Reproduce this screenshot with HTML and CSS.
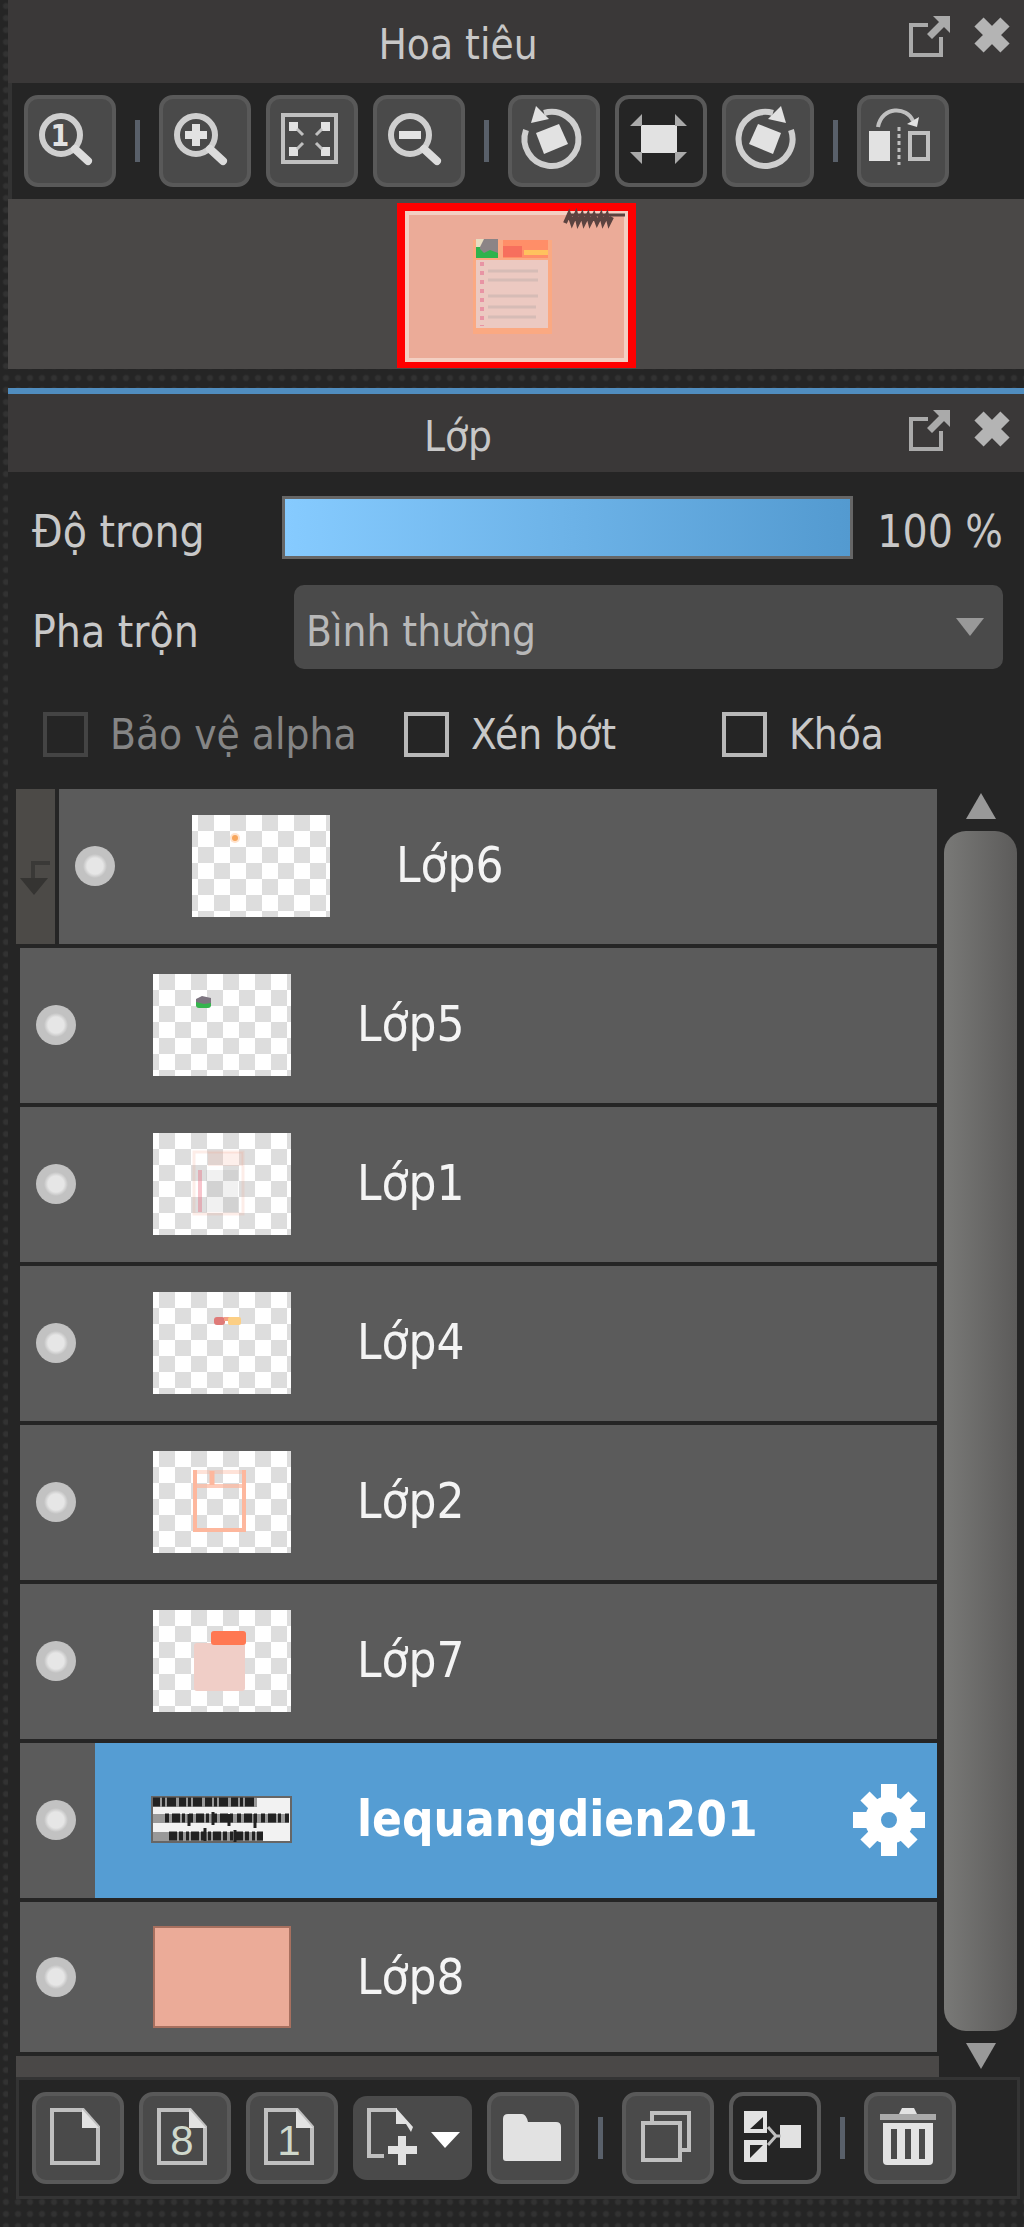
FILE: index.html
```html
<!DOCTYPE html>
<html lang="vi">
<head>
    <meta charset="UTF-8">
    <title>Hoa tiêu - Lớp</title>
    <link rel="stylesheet" href="styles.css">
</head>
<body>

<section class="panel">
    <header class="panel-header">
        <h2>Hoa tiêu</h2>
        <button class="header-btn" aria-label="Tách cửa sổ">
            <svg width="44" height="44"><path d="M20 11H3v30h30V23" fill="none" stroke="#aaa" stroke-width="4"/><path d="M25 2h17v17zM34 5l5 5-15 15-5-5z" fill="#aaa"/></svg>
        </button>
        <button class="header-btn" aria-label="Đóng">
            <svg width="40" height="44"><path d="M7 8l26 26M33 8L7 34" stroke="#b4b4b4" stroke-width="13"/></svg>
        </button>
    </header>

    <div class="toolbar">
        <button class="tool" aria-label="100%">
            <svg viewBox="4 4 84 84"><circle cx="37" cy="40" r="19" class="line thick"/><path d="M51 54l13 12" class="line handle"/><text x="36" y="51" class="mag-text">1</text></svg>
        </button>
        <span class="sep"></span>
        <button class="tool" aria-label="Phóng to">
            <svg viewBox="4 4 84 84"><circle cx="37" cy="40" r="19" class="line thick"/><path d="M51 54l13 12" class="line handle"/><path d="M26 40h22M37 29v22" class="line bold"/></svg>
        </button>
        <button class="tool" aria-label="Vừa màn hình">
            <svg viewBox="4 4 84 84"><rect x="17" y="20" width="53" height="47" class="line"/><path d="M23 27h9v9h-9zM55 27h9v9h-9zM23 52h9v9h-9zM55 52h9v9h-9z" class="fill"/><path d="M31 34l6 6M56 34l-6 6M31 54l6-6M56 54l-6-6" class="line thin"/></svg>
        </button>
        <button class="tool" aria-label="Thu nhỏ">
            <svg viewBox="4 4 84 84"><circle cx="37" cy="40" r="19" class="line thick"/><path d="M51 54l13 12" class="line handle"/><path d="M26 40h22" class="line bold"/></svg>
        </button>
        <span class="sep"></span>
        <button class="tool" aria-label="Xoay trái">
            <svg viewBox="4 4 84 84"><path d="M18 35A27 27 0 1 0 36 18" class="line thick"/><path d="M28 11l13 13-18 4z" class="fill"/><path d="M28 38l23-9 9 20-24 10z" class="fill"/></svg>
        </button>
        <button class="tool active" aria-label="Đặt lại góc xoay">
            <svg viewBox="4 4 84 84"><path d="M26 30h36v28H26z" class="fill"/><path d="M27 19v12H15zM60 19v12h12zM15 57h12v12zM60 57h12L60 69z" fill="#aaa"/></svg>
        </button>
        <button class="tool" aria-label="Xoay phải">
            <svg viewBox="4 4 84 84"><g transform="translate(87 0) scale(-1 1)"><path d="M18 35A27 27 0 1 0 36 18" class="line thick"/><path d="M28 11l13 13-18 4z" class="fill"/><path d="M28 38l23-9 9 20-24 10z" class="fill"/></g></svg>
        </button>
        <span class="sep"></span>
        <button class="tool" aria-label="Lật ngang">
            <svg viewBox="4 4 84 84"><path d="M12 36h21v30H12z" class="fill"/><rect x="53" y="38" width="18" height="26" class="line"/><path d="M42 32v38" class="line thin" stroke-dasharray="4 3"/><path d="M21 32C25 11 50 11 56 26" class="line"/><path d="M50 29l12-7-2 10z" class="fill"/></svg>
        </button>
    </div>

    <div class="navigator">
        <svg class="preview" width="239" height="165">
            <rect width="239" height="165" fill="#f00"/>
            <rect x="8" y="8" width="223" height="151" fill="#f3cfc2"/>
            <rect x="12" y="12" width="215" height="143" fill="#ebab98"/>
            <rect x="76" y="37" width="79" height="94" fill="#fba982"/>
            <rect x="79" y="57" width="72" height="68" fill="#ecc9c1"/>
            <rect x="79" y="36" width="22" height="19" fill="#2eb34c"/>
            <path d="M83 46V36h18v14l-8-3-6 3z" fill="#8b8486"/>
            <path d="M79 44v-8h8l-4 8z" fill="#e8dcc0"/>
            <rect x="106" y="37" width="45" height="18" fill="#ff8e68"/>
            <path d="M106 43h19v11h-19z" fill="#f76f5d"/>
            <path d="M127 47h24v5h-24z" fill="#ffc25e"/>
            <path d="M91 68h50M91 77h50M91 93h50M91 104h48M91 114h48" stroke="#d6bcb6" stroke-width="3"/>
            <path d="M85 59v64" stroke="#e894a4" stroke-width="4" stroke-dasharray="4 5"/>
            <path d="M168 20l4-9 3 9 4-9 2 9 4-8 2 8 4-8 2 8 4-8 3 8 4-8 2 8 4-8 2 8 3-6" fill="none" stroke="#5b4340" stroke-width="4"/>
            <path d="M172 12h46M216 12h12" stroke="#5b4340" stroke-width="3"/>
        </svg>
    </div>
</section>

<div class="splitter"></div>

<section class="panel focused">
    <header class="panel-header">
        <h2>Lớp</h2>
        <button class="header-btn" aria-label="Tách cửa sổ">
            <svg width="44" height="44"><path d="M20 11H3v30h30V23" fill="none" stroke="#aaa" stroke-width="4"/><path d="M25 2h17v17zM34 5l5 5-15 15-5-5z" fill="#aaa"/></svg>
        </button>
        <button class="header-btn" aria-label="Đóng">
            <svg width="40" height="44"><path d="M7 8l26 26M33 8L7 34" stroke="#b4b4b4" stroke-width="13"/></svg>
        </button>
    </header>

    <div class="options">
        <div class="option-row">
            <label for="opacity">Độ trong</label>
            <input type="range" id="opacity" class="opacity" min="0" max="100" value="100">
            <output for="opacity">100 %</output>
        </div>
        <div class="option-row">
            <label for="blend">Pha trộn</label>
            <div class="select-box">
                <select id="blend">
                    <option>Bình thường</option>
                </select>
            </div>
        </div>
        <div class="checks">
            <label class="disabled"><input type="checkbox" disabled>Bảo vệ alpha</label>
            <label><input type="checkbox">Xén bớt</label>
            <label><input type="checkbox">Khóa</label>
        </div>
    </div>

    <div class="layers-area">
        <ul class="layers">
            <li class="layer clipped">
                <span class="clip"><svg width="39" height="40"><path d="M34 6H17v16" fill="none" stroke="#3a3937" stroke-width="4"/><path d="M4 21h28L18 38z" fill="#353432"/></svg></span>
                <div class="layer-body">
                    <input type="checkbox" class="eye" aria-label="Hiện Lớp6" checked>
                    <svg class="thumb" viewBox="0 0 138 102"><circle cx="43" cy="23" r="5" fill="#ffe3cd"/><circle cx="43" cy="23" r="3" fill="#f7a65c"/></svg>
                    <span class="name">Lớp6</span>
                </div>
            </li>
            <li class="layer">
                <div class="layer-body">
                    <input type="checkbox" class="eye" aria-label="Hiện Lớp5" checked>
                    <svg class="thumb" viewBox="0 0 138 102"><path d="M43 32v-7l6-3 9 2v8z" fill="#7d7580"/><path d="M43 28l8 2 7-1v2q0 3-3 3h-9q-3 0-3-3z" fill="#35b44d"/></svg>
                    <span class="name">Lớp5</span>
                </div>
            </li>
            <li class="layer">
                <div class="layer-body">
                    <input type="checkbox" class="eye" aria-label="Hiện Lớp1" checked>
                    <svg class="thumb" viewBox="0 0 138 102"><g fill="none" stroke="#f6a58e"><rect x="41" y="19" width="49" height="62" stroke-width="3" opacity=".2"/><path d="M55 26h35" stroke-width="14" opacity=".18"/><path d="M47 37v42" stroke="#e8556c" stroke-width="4" opacity=".35"/></g><path d="M53 37h32v42H53z" fill="#777" opacity=".1"/></svg>
                    <span class="name">Lớp1</span>
                </div>
            </li>
            <li class="layer">
                <div class="layer-body">
                    <input type="checkbox" class="eye" aria-label="Hiện Lớp4" checked>
                    <svg class="thumb" viewBox="0 0 138 102"><rect x="61" y="25" width="11" height="8" rx="3" fill="#df7a78"/><path d="M71 25h12v4H71z" fill="#f4a084"/><rect x="75" y="25" width="13" height="8" rx="2" fill="#fccf85"/></svg>
                    <span class="name">Lớp4</span>
                </div>
            </li>
            <li class="layer">
                <div class="layer-body">
                    <input type="checkbox" class="eye" aria-label="Hiện Lớp2" checked>
                    <svg class="thumb" viewBox="0 0 138 102"><g fill="none" stroke="#fdb79d" stroke-width="4"><path d="M42 19v60h49V19"/><path d="M42 35h49" opacity=".7"/><path d="M42 21h49" opacity=".4"/><path d="M59 20v14" stroke-width="5"/></g></svg>
                    <span class="name">Lớp2</span>
                </div>
            </li>
            <li class="layer">
                <div class="layer-body">
                    <input type="checkbox" class="eye" aria-label="Hiện Lớp7" checked>
                    <svg class="thumb" viewBox="0 0 138 102"><rect x="41" y="33" width="51" height="48" rx="3" fill="#f0cec7"/><rect x="58" y="21" width="35" height="14" rx="3" fill="#ff7852"/></svg>
                    <span class="name">Lớp7</span>
                </div>
            </li>
            <li class="layer selected">
                <div class="layer-body">
                    <input type="checkbox" class="eye" aria-label="Hiện lequangdien201" checked>
                    <svg class="thumb text-thumb" viewBox="0 0 141 47">
                        <rect x="1" y="1" width="139" height="45" fill="#f2f2f2" stroke="#666" stroke-width="2"/>
                        <path d="M2 2h104v9H2zM2 18h136v9H2zM2 36h110v9H2z" fill="#999"/>
                        <path d="M2 6h104" stroke="#222" stroke-width="9" stroke-dasharray="7 2 3 2 9 3"/>
                        <path d="M14 22h126" stroke="#222" stroke-width="9" stroke-dasharray="4 3 8 2 3 4"/>
                        <path d="M18 40h94" stroke="#222" stroke-width="9" stroke-dasharray="8 2 4 3 3 2"/>
                        <path d="M38 18v12M62 16v13M78 18v12M104 18v14M54 32v13M84 34v12" stroke="#222" stroke-width="3"/>
                    </svg>
                    <span class="name">lequangdien201</span>
                    <button class="gear" aria-label="Thuộc tính lớp">
                        <svg width="74" height="74" viewBox="-37 -37 74 74"><path d="M0-36v25M0 36V11M-36 0h25M36 0H11" stroke="#fff" stroke-width="16"/><path d="M-24-24l14 14M24-24L10-10M-24 24l14-14M24 24L10 10" stroke="#fff" stroke-width="13"/><circle r="16" fill="none" stroke="#fff" stroke-width="16"/></svg>
                    </button>
                </div>
            </li>
            <li class="layer">
                <div class="layer-body">
                    <input type="checkbox" class="eye" aria-label="Hiện Lớp8" checked>
                    <svg class="thumb" viewBox="0 0 138 102"><rect x="1" y="1" width="136" height="100" fill="#ebab98" stroke="#a8705f" stroke-width="2"/></svg>
                    <span class="name">Lớp8</span>
                </div>
            </li>
        </ul>
        <div class="scrollbar">
            <svg width="30" height="26"><path d="M15 0l15 26H0z" fill="#999"/></svg>
            <div class="scroll-thumb"></div>
            <svg width="30" height="26"><path d="M0 0h30L15 26z" fill="#999"/></svg>
        </div>
    </div>

    <div class="toolbar bottom">
        <button class="tool" aria-label="Thêm lớp">
            <svg viewBox="4 4 84 84"><path d="M20 18h31l15 17v36H20z" class="line"/><path d="M50 17l17 19H50z" class="fill"/></svg>
        </button>
        <button class="tool" aria-label="Thêm lớp 8 bit">
            <svg viewBox="4 4 84 84"><path d="M20 18h31l15 17v36H20z" class="line"/><path d="M50 17l17 19H50z" class="fill"/><text x="43" y="63" class="bit-text">8</text></svg>
        </button>
        <button class="tool" aria-label="Thêm lớp 1 bit">
            <svg viewBox="4 4 84 84"><path d="M20 18h31l15 17v36H20z" class="line"/><path d="M50 17l17 19H50z" class="fill"/><text x="43" y="63" class="bit-text">1</text></svg>
        </button>
        <button class="tool wide" aria-label="Thêm lớp khác">
            <svg viewBox="0 0 119 84"><path d="M31 60H16V14h28" class="line"/><path d="M43 12l17 19-2 5-5-8H43z" class="fill"/><path d="M35 54h29M49 40v29" class="line bold"/><path d="M78 36h29L92 52z" fill="#fff"/></svg>
        </button>
        <button class="tool" aria-label="Thêm thư mục">
            <svg viewBox="4 4 84 84"><path d="M16 27q0-5 5-5h14q4 0 6 8h28q5 0 5 5v34H19q-3 0-3-3z" class="fill"/></svg>
        </button>
        <span class="sep"></span>
        <button class="tool" aria-label="Nhân đôi lớp">
            <svg viewBox="4 4 84 84"><path d="M30 30V21h37v37h-9" class="line"/><rect x="21" y="31" width="37" height="37" class="line"/></svg>
        </button>
        <button class="tool active" aria-label="Gộp lớp">
            <svg viewBox="4 4 84 84"><path d="M15 19h23v22H15zM15 48h23v22H15zM51 33h21v23H51z" class="fill"/><path d="M34 25v12H21zM21 53h13L21 66z" fill="#252525"/><path d="M39 35l8 9-8 9M47 44h5" class="line thin"/></svg>
        </button>
        <span class="sep"></span>
        <button class="tool" aria-label="Xóa lớp">
            <svg viewBox="4 4 84 84"><path d="M16 22h56v6H16z" fill="#aaa"/><path d="M35 22l3-6h12l3 6z" class="fill"/><path d="M19 31h50v38q0 4-4 4H23q-4 0-4-4z" class="fill"/><path d="M30 37v30M44 37v30M58 37v30" stroke="#4a4a4a" stroke-width="6"/></svg>
        </button>
    </div>
</section>

</body>
</html>
```
FILE: styles.css
```css
body {
    margin: 0;
    padding: 0 0 28px 8px;
    font-family: "DejaVu Sans Condensed", "Noto Sans", sans-serif;
    font-size: 42px;
    color: #c8c8c8;
    background-color: #252525;
    background-image: radial-gradient(circle, #323232 2px, transparent 4px);
    background-size: 12px 12px;
}
h2, ul {
    margin: 0;
    padding: 0;
    font-weight: normal;
}
h2 {
    flex: 1;
    padding-top: 6px;
    font-size: 42px;
    text-align: center;
}
svg {
    display: block;
}
button {
    padding: 0;
    border: none;
    background: none;
}
input {
    margin: 0;
    appearance: none;
}

.panel {
    background-color: #252525;
}
.focused {
    border-top: 6px solid #508dbf;
}
.panel-header {
    display: flex;
    align-items: center;
    height: 83px;
    padding-right: 12px;
    background-color: #3a3838;
}
.focused .panel-header {
    height: 78px;
}
.header-btn {
    align-self: flex-start;
    margin: 14px 0 0 20px;
}
h2 + .header-btn {
    margin-left: 0;
}

.toolbar {
    display: flex;
    align-items: center;
    gap: 15px;
    height: 116px;
    padding-left: 12px;
    border-left: 4px solid #333;
    box-sizing: border-box;
}
.tool {
    width: 92px;
    height: 92px;
    box-sizing: border-box;
    border: 4px solid #595959;
    border-radius: 14px;
    background-color: #4a4a4a;
}
.tool.active {
    background-color: #252525;
}
.tool.wide {
    width: 119px;
    height: 84px;
    border: none;
}
.sep {
    width: 5px;
    height: 42px;
    margin: 0 4px;
    background-color: #59606a;
}
.line {
    fill: none;
    stroke: #c0c0c0;
    stroke-width: 4px;
}
.thick {
    stroke: #cfcfcf;
    stroke-width: 6px;
}
.thin {
    stroke-width: 3px;
}
.bold {
    stroke: #e2e2e2;
    stroke-width: 8px;
}
.handle {
    stroke: #dcdcdc;
    stroke-width: 8px;
    stroke-linecap: round;
}
.fill {
    fill: #e2e2e2;
}
.mag-text {
    font: bold 30px "DejaVu Sans Condensed", sans-serif;
    text-anchor: middle;
    fill: #e2e2e2;
}
.bit-text {
    font: 42px "Liberation Sans", sans-serif;
    text-anchor: middle;
    fill: #cfd8cc;
}

.navigator {
    display: flex;
    justify-content: center;
    padding: 4px 0 1px;
    background-color: #4a4847;
}
.splitter {
    height: 19px;
}

.options {
    padding: 24px 21px 32px 24px;
}
.option-row {
    display: flex;
    align-items: center;
    margin-bottom: 26px;
    font-size: 44px;
}
.option-row label {
    width: 250px;
    padding-top: 8px;
}
.opacity {
    flex: 1;
    height: 63px;
    box-sizing: border-box;
    border: 3px solid #666;
    background: linear-gradient(to right, #86cbff, #539ad0);
}
.opacity::-webkit-slider-thumb {
    appearance: none;
}
output {
    width: 150px;
    padding-top: 8px;
    text-align: right;
}
.select-box {
    position: relative;
    flex: 1;
    margin-left: 12px;
}
.select-box::after {
    content: "";
    position: absolute;
    right: 19px;
    top: 33px;
    border: 14px solid transparent;
    border-top: 18px solid #999;
    border-bottom: none;
}
select {
    display: block;
    width: 100%;
    height: 84px;
    padding: 8px 12px 0;
    border: none;
    border-radius: 10px;
    appearance: none;
    font-family: inherit;
    font-size: 42px;
    color: #b8b8b8;
    background-color: #4a4a4a;
}
.checks {
    display: grid;
    grid-template-columns: 361fr 318fr 281fr;
    padding: 17px 0 0 11px;
}
.checks label {
    display: flex;
    align-items: center;
    gap: 22px;
    height: 45px;
}
.checks input {
    width: 45px;
    height: 45px;
    box-sizing: border-box;
    border: 4px solid #b8b8b8;
}
.checks .disabled {
    color: #858585;
}
.checks .disabled input {
    border-color: #444;
}

.layers-area {
    display: flex;
    padding: 0 7px 0 8px;
}
.layers {
    flex: 1;
    padding-bottom: 21px;
    list-style: none;
    background: linear-gradient(#4a4847, #4a4847) bottom / 100% 21px no-repeat;
}
.layer {
    display: flex;
    height: 155px;
    padding: 0 2px 4px 4px;
}
.layer:last-child {
    height: 150px;
}
.clipped {
    padding-left: 0;
}
.clip {
    display: flex;
    align-items: center;
    width: 39px;
    margin-right: 4px;
    padding-top: 20px;
    box-sizing: border-box;
    background-color: #4c4a47;
}
.layer-body {
    flex: 1;
    display: flex;
    align-items: center;
    padding: 0 0 2px 16px;
    background-color: #5b5b5b;
}
.layer:last-child .layer-body {
    padding-bottom: 0;
}
.eye {
    width: 40px;
    height: 40px;
    border-radius: 50%;
    background: radial-gradient(circle, #e6e6e6 8px, #c2c2c2 12px);
}
.thumb {
    width: 138px;
    height: 102px;
    margin: 0 66px 0 77px;
    background: conic-gradient(#ddd 25%, #fff 0 50%, #ddd 0 75%, #fff 0) -10px 0 / 32px 32px;
}
.text-thumb {
    width: 141px;
    height: 47px;
    margin: 0 65px 0 75px;
    background: none;
}
.name {
    flex: 1;
    font-size: 49px;
    color: #f4f4f4;
}
.selected .layer-body {
    background: linear-gradient(to right, #5b5b5b 75px, #559dd3 75px);
}
.selected .name {
    font-weight: bold;
    color: #fff;
}
.gear {
    margin-right: 11px;
}

.scrollbar {
    display: flex;
    flex-direction: column;
    align-items: center;
    gap: 12px;
    width: 73px;
    margin-left: 5px;
    padding: 4px 0 8px;
}
.scroll-thumb {
    flex: 1;
    width: 100%;
    border-radius: 22px;
    background: linear-gradient(to right, #797977, #5c5b5a);
}

.bottom {
    height: 122px;
    margin: 0 4px 0 8px;
    padding-left: 13px;
    border: 3px solid #343434;
}
```
